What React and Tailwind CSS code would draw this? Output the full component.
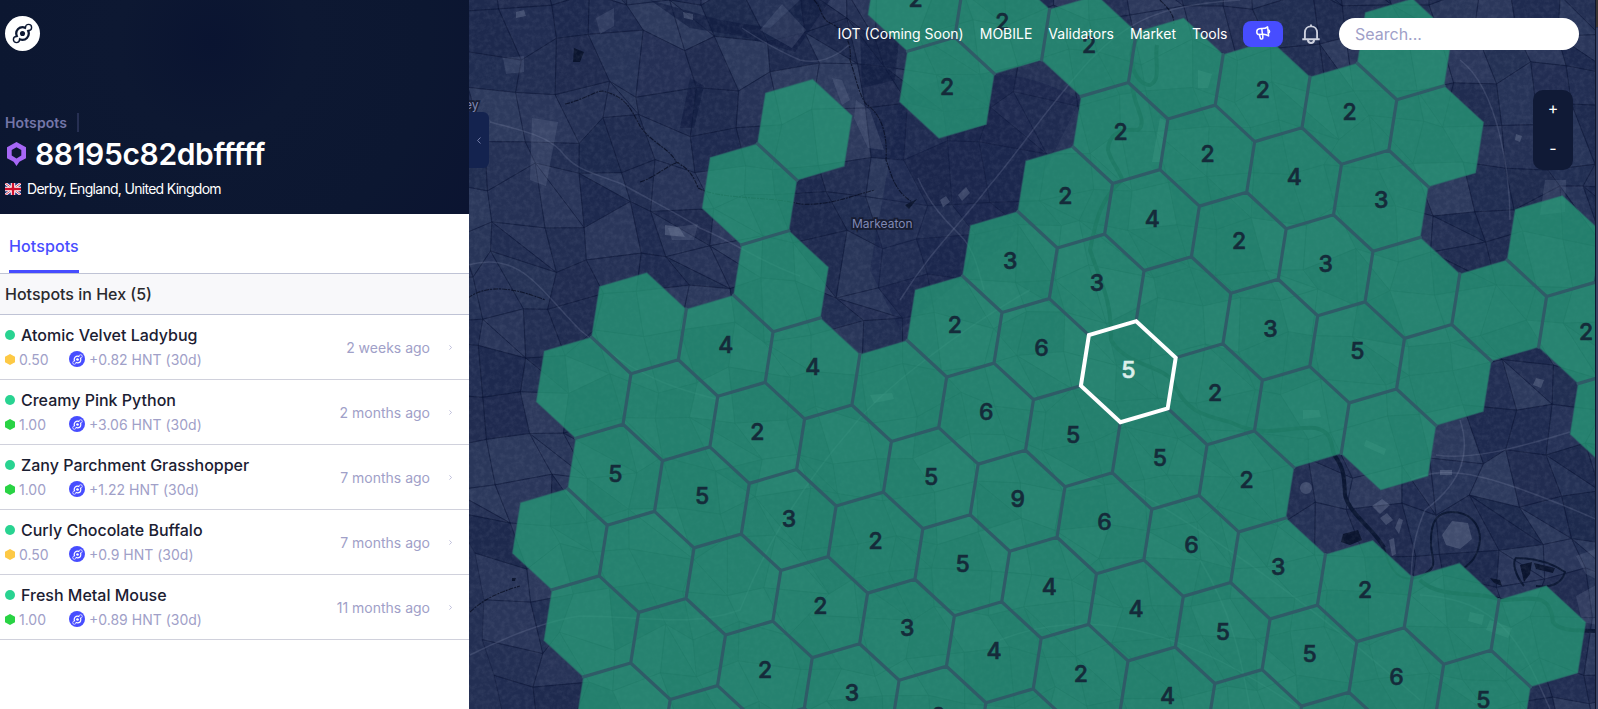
import React from "react";

/* ---------- map data ---------- */

// Each row runs along the lattice vector A; [j, firstI, labels...] where "" is an unlabelled
// cell and null is a gap.
const ROWS = [
  [-5, 0, ""],
  [-4, -5, "2", "2", "2", "", "2", "2", ""],
  [-3, -4, "2", null, "2", "2", "4", "3", null, ""],
  [-2, -5, "", null, null, "2", "4", "2", "3", "", "", "2"],
  [-1, -5, "", null, null, "3", "3", "", "3", "5", "", null, ""],
  [0, -4, "", null, "2", "6", "5", "2", "", ""],
  [1, -5, "", "4", "4", "", "6", "5", "5", "2"],
  [2, -5, "", "", "2", "", "5", "9", "6", "6", "3", "2", "", ""],
  [3, -4, "5", "5", "3", "2", "5", "4", "4", "5", "5", "6", "5"],
  [4, -4, "", "", "", "2", "3", "4", "2", "4", "", ""],
  [5, -3, "", "", "2", "3", "2", "", ""],
  [6, -2, "", "", ""],
];

const A = [86.8, 22.6];
const C = [-55.3, 64.5];
const VERTS = [
  [39.4, 36.6],
  [-7.9, 50.5],
  [-47.4, 14],
  [-39.4, -36.6],
  [7.9, -50.5],
  [47.4, -14],
];
// neighbour across the edge from vertex k to vertex k+1
const NEIGHBOURS = [
  [1, 1],
  [0, 1],
  [-1, 0],
  [-1, -1],
  [0, -1],
  [1, 0],
];

const HEXES = [];
ROWS.forEach(([j, start, ...labels]) => {
  labels.forEach((label, n) => {
    if (label === null) return;
    const i = start + n;
    HEXES.push({
      i,
      j,
      label,
      x: 1128.2 + A[0] * i + C[0] * j,
      y: 371.7 + A[1] * i + C[1] * j,
      selected: i === 0 && j === 0,
    });
  });
});
const OCCUPIED = new Set(HEXES.map((h) => `${h.i},${h.j}`));
const points = (h) => VERTS.map(([dx, dy]) => `${(h.x + dx).toFixed(1)},${(h.y + dy).toFixed(1)}`).join(" ");

const INNER = [];
HEXES.forEach((h) => {
  NEIGHBOURS.forEach(([di, dj], k) => {
    if (k > 1 && k < 5) return;
    if (!OCCUPIED.has(`${h.i + di},${h.j + dj}`)) return;
    const a = VERTS[k];
    const b = VERTS[(k + 1) % 6];
    INNER.push(`M${(h.x + a[0]).toFixed(1)} ${(h.y + a[1]).toFixed(1)}L${(h.x + b[0]).toFixed(1)} ${(h.y + b[1]).toFixed(1)}`);
  });
});

/* ---------- terrain ---------- */

const seeded = (seed) => {
  let s = seed;
  return () => {
    s = (s * 1664525 + 1013904223) % 4294967296;
    return s / 4294967296;
  };
};

const FIELDS = (() => {
  const rnd = seeded(77);
  const cols = 32;
  const rows = 20;
  const size = 42;
  const grid = [];
  for (let r = 0; r <= rows; r++) {
    grid.push([]);
    for (let c = 0; c <= cols; c++) {
      const x = 440 + c * size + (rnd() - 0.5) * 26;
      const y = -60 + r * size + (rnd() - 0.5) * 26;
      grid[r].push([x + (y - 350) * 0.18, y - (x - 1000) * 0.06]);
    }
  }
  const out = [];
  for (let r = 0; r < rows; r++) {
    for (let c = 0; c < cols; c++) {
      const q = [grid[r][c], grid[r][c + 1], grid[r + 1][c + 1], grid[r + 1][c]];
      const v = rnd();
      const split = rnd();
      const put = (pts, t) =>
        out.push({
          d: pts.map((p) => `${p[0].toFixed(1)},${p[1].toFixed(1)}`).join(" "),
          fill: t > 0.45 ? "#7f8fae" : "#071338",
          o: t > 0.45 ? (t - 0.45) * 0.22 : (0.45 - t) * 0.45,
        });
      if (split > 0.8) {
        put([q[0], q[1], q[2]], v);
        put([q[0], q[2], q[3]], rnd());
      } else put(q, v);
    }
  }
  return out;
})();

const ROADS = [
  "M490 122 C520 130 545 135 560 150 C575 170 590 172 622 184 C650 200 680 215 700 228 C730 240 760 262 800 276",
  "M742 28 C760 40 780 52 800 60 C818 64 835 58 850 44",
  "M1240 0 C1160 5 1130 20 1090 60 C1045 110 1020 150 990 185 C960 225 935 245 900 300",
  "M918 178 C930 205 945 220 960 235 C975 250 978 270 984 290",
  "M470 655 C500 640 540 622 580 616 C640 616 690 628 740 610 C760 560 790 500 850 430 C880 390 960 330 1030 290",
  "M1436 455 C1470 460 1510 450 1570 432",
  "M1460 420 C1470 450 1465 480 1425 510 C1412 540 1412 560 1411 580",
  "M1411 480 C1440 470 1460 460 1598 520",
  "M1420 595 C1500 600 1520 640 1550 709",
  "M468 265 C520 250 540 290 580 330 C640 380 680 390 720 400",
  "M1200 560 C1230 610 1240 650 1250 709",
  "M1000 640 C1100 600 1200 640 1300 709",
  "M1460 60 C1500 90 1510 180 1510 220",
  "M1120 480 C1180 520 1260 560 1420 700",
];

const STREAMS = [
  "M565 104 C590 98 598 88 606 92 C628 98 632 112 640 126 C650 142 672 150 676 162 C688 168 694 176 698 188 C720 200 770 196 800 204 C830 206 850 196 875 190",
  "M814 0 C822 8 820 16 828 22 C846 30 852 44 850 60 C856 78 858 92 866 104 C878 112 888 128 886 160 C892 176 894 190 912 202",
  "M1160 0 C1168 8 1174 14 1174 24",
  "M640 182 C658 176 668 164 680 162",
  "M468 298 C490 282 520 290 545 300",
  "M470 612 C485 598 500 592 520 586",
];

const Terrain = () => (
  <g>
    <rect x="469" width="1129" height="709" fill="#232f53" />
    <g stroke="#0c1738" strokeOpacity="0.4" strokeWidth="1">
      {FIELDS.map((f, k) => (
        <polygon key={k} points={f.d} fill={f.fill} fillOpacity={f.o} />
      ))}
    </g>
    <path
      d="M650 0 L720 20 L770 28 L800 0 L830 0 L795 52 L740 36 L690 28Z M860 30 L900 30 L895 80 L862 88Z M690 78 L704 86 L694 128 L680 128Z"
      fill="#0f1b3f"
      fillOpacity="0.6"
    />
    <path d="M900 100 C940 70 1010 60 1080 100 L1010 240 L900 330 L870 270Z" fill="#16224a" fillOpacity="0.45" />
    <path
      d="M832 78 L842 80 L850 100 L842 105Z M856 100 L870 110 L884 150 L868 148 L854 118Z M532 118 L558 122 L546 186 L530 180Z M668 228 L698 224 L694 240 L672 240Z M1540 215 L1565 212 L1566 180 L1545 180Z M1576 556 L1598 548 L1598 580 L1586 574Z M1576 596 L1598 584 L1598 625 L1582 622Z M596 18 L614 8 L614 26 L600 34Z M503 58 L524 56 L524 72 L506 74Z M760 30 L782 4 L806 30 L792 48Z"
      fill="#8e9bb8"
      fillOpacity="0.17"
    />
    <g fill="none" stroke="#8793b0" strokeOpacity="0.22" strokeWidth="1.5">
      {ROADS.map((d) => (
        <path key={d} d={d} />
      ))}
    </g>
    <g fill="none" stroke="#060d22" strokeOpacity="0.8" strokeWidth="1.1" strokeDasharray="5 1 2 1">
      {STREAMS.map((d) => (
        <path key={d} d={d} />
      ))}
    </g>
    <g fill="none" stroke="#0b1733" strokeWidth="4" strokeLinejoin="round">
      <path d="M1137 38 C1125 60 1135 84 1150 85 C1162 80 1154 60 1157 45" />
      <path d="M1132 85 C1135 110 1148 122 1138 130 C1120 128 1108 135 1108 150 C1112 165 1120 170 1122 180 C1100 200 1096 220 1090 250 C1100 280 1112 300 1111 340 C1125 365 1160 365 1172 380 C1185 410 1200 415 1230 422 C1265 440 1290 425 1315 428 C1335 432 1330 448 1335 456 C1345 470 1344 480 1345 495 C1350 515 1375 530 1384 548" />
      <path d="M1384 548 C1390 572 1400 583 1420 577 C1440 566 1432 562 1431 545 C1430 520 1438 512 1452 512 C1468 512 1480 522 1480 540 C1478 556 1472 562 1464 568 M1524 586 C1515 575 1512 562 1516 558 C1540 558 1556 566 1565 572 C1562 584 1550 588 1536 586" strokeWidth="2" />
      <path d="M1420 580 C1440 600 1480 590 1500 600 C1530 600 1550 590 1553 622 C1560 632 1580 630 1598 631" />
    </g>
    <path
      d="M574 48 L584 52 L580 62 L573 62Z M1520 565 L1532 562 L1530 574 L1524 582Z M1534 563 L1555 568 L1553 573 L1536 569Z M1343 534 L1358 530 L1362 540 L1350 545 L1341 542Z M512 578 l4 0 l-1 3 l-3 0Z M905 205 l12 -6 l-8 10Z M1490 578 l10 2 l2 6 l-8 -3Z"
      fill="#0a142e"
    />
    <g fill="#a0abc4" fillOpacity="0.25">
      <path d="M1372 506 l10 -7 l8 6 l-10 9z M1380 518 l7 -5 l6 7 l-7 5z M1395 528 l4 -10 l4 2 l-4 14z M1389 540 l5 -2 l2 16 l-4 2z M1440 470 l12 0 l0 5 l-12 0z M1300 488 a6 6 0 1 0 12 0 a6 6 0 1 0 -12 0z M1442 535 l10 -14 l16 2 l4 16 l-12 10 l-14 -4z" />
      <path d="M1366 440 l20 9 l-2 6 l-20 -9z M1303 410 l16 0 l2 7 l-18 2z M1490 620 l22 8 l-4 10 l-22 -8z M1470 612 l14 3 l-2 10 l-14 -4z M665 225 l14 2 l6 10 l-20 -2z M683 12 l10 2 l0 6 l-9 -2z M516 12 l8 -2 l2 6 l-10 2z M940 200 l6 -4 l4 6 l-7 5z M958 195 l8 -8 l4 6 l-8 8z M1516 134 l6 2 l-2 6 l-5 -2z M1536 378 l8 2 l-3 8 l-8 -3z M870 395 l22 -2 l2 6 l-20 4z M1198 70 l14 4 l-4 14 l-10 0z M1160 118 l8 4 l-8 40 l-8 0z" />
    </g>
    <rect x="469" width="1129" height="709" filter="url(#grain)" opacity="0.07" />
  </g>
);

const HexMap = () => (
  <svg className="block h-[709px] w-[1129px]" viewBox="469 0 1129 709">
    <defs>
      <filter id="grain" x="0" y="0" width="100%" height="100%">
        <feTurbulence type="fractalNoise" baseFrequency="0.2" numOctaves="4" seed="8" />
        <feColorMatrix values="0 0 0 0 0.5  0 0 0 0 0.55  0 0 0 0 0.7  2.4 0 0 0 -0.9" />
      </filter>
    </defs>
    <Terrain />
    <g fontFamily="Inter, sans-serif" fontSize="12" fill="#8089b5" stroke="#171d33" strokeWidth="3.5" paintOrder="stroke">
      <text x="852" y="227.5">Markeaton</text>
      <text x="465" y="108.5">ey</text>
    </g>
    <g fill="#269f79" fillOpacity="0.73" stroke="#2d6268" strokeOpacity="0.45" strokeWidth="1.5">
      {HEXES.map((h) => (
        <polygon key={`${h.i},${h.j}`} points={points(h)} />
      ))}
    </g>
    <path d={INNER.join("")} fill="none" stroke="#2f5b67" strokeWidth="3.2" strokeLinecap="round" />
    <g fontFamily="Inter, sans-serif" fontSize="23" fontWeight="500" textAnchor="middle">
      {HEXES.filter((h) => h.label).map((h) => (
        <text
          key={`${h.i},${h.j}`}
          x={h.x + 0.2}
          y={h.y + 6.7}
          fill={h.selected ? "#dcefeb" : "#152b3a"}
          stroke={h.selected ? "#dcefeb" : "#152b3a"}
          strokeWidth="0.6"
        >
          {h.label}
        </text>
      ))}
    </g>
    <polygon points={points({ x: 1128.3, y: 371.7 })} fill="none" stroke="#fff" strokeWidth="4" />
    <rect x="1595" width="1" height="709" fill="#10172b" />
    <rect x="1596" width="2" height="27" fill="#3a3636" />
    <rect x="1596" y="28" width="2" height="681" fill="#3a4467" />
  </svg>
);

/* ---------- icons ---------- */

const HeliumGlyph = ({ className }) => (
  <svg className={className} viewBox="0 0 24 24" fill="none" stroke="currentColor">
    <circle cx="12" cy="12" r="7.2" strokeWidth="2.6" />
    <circle cx="12" cy="12" r="2.9" fill="currentColor" stroke="none" />
    <circle className="fill-(--disc)" cx="18.9" cy="5.1" r="3.5" strokeWidth="1.6" />
    <circle className="fill-(--disc)" cx="5.1" cy="18.9" r="3.5" strokeWidth="1.6" />
    <path className="stroke-(--disc)" d="M14.6 9.4 L18 6 M9.4 14.6 L6 18" strokeWidth="2.2" />
  </svg>
);

const UkFlag = () => (
  <svg className="h-3 w-4" viewBox="0 0 16 12">
    <rect width="16" height="12" fill="#1f2f7d" />
    <path d="M0 0L16 12M16 0L0 12" stroke="#fff" strokeWidth="2.6" />
    <path d="M0 0L16 12M16 0L0 12" stroke="#d2203b" strokeWidth="0.9" />
    <path d="M8 0V12M0 6H16" stroke="#fff" strokeWidth="4.4" />
    <path d="M8 0V12M0 6H16" stroke="#d2102e" strokeWidth="2.4" />
  </svg>
);

const HexPin = () => (
  <svg className="h-6 w-[19px]" viewBox="0 0 19 24">
    <path
      d="M9.5 0L19 5.3V16.2L12.4 19.8L9.5 24L6.6 19.8L0 16.2V5.3Z M9.5 5.2L4.7 8V13.6L9.5 16.4L14.3 13.6V8Z"
      fill="#a667f6"
      fillRule="evenodd"
    />
  </svg>
);

const Megaphone = () => (
  <svg className="h-[14px] w-[15px]" viewBox="0 0 15 14" fill="none" stroke="#fff" strokeWidth="1.5" strokeLinecap="round" strokeLinejoin="round">
    <path d="M5.6 2.6C8 2.7 10 2.2 11.6 0.9L12.6 10C10.8 8.7 9 8.1 6.6 8.3L3.4 8.6C1.8 8.6 0.8 7.4 0.8 5.9C0.8 4.2 1.8 3 3.3 2.8Z" />
    <path d="M5.8 2.8L6.4 8.2M3.4 8.6L4.4 12.4C4.7 13.3 6.8 13.1 6.8 11.9V8.5M12.2 3.9C13.8 3.9 14.2 6.6 12.4 7" />
  </svg>
);

const Bell = () => (
  <svg className="h-5 w-[18px]" viewBox="0 0 18 20" fill="none" stroke="#cdd1de" strokeWidth="1.9">
    <path d="M9 0.4V2.4 M0.3 15.2H17.7 M2.9 15V8.6C2.9 5 5.4 2.4 9 2.4S15.1 5 15.1 8.6V15" />
    <path d="M5.9 15.6C6 17.8 7.2 19 9 19S12 17.8 12.1 15.6" />
  </svg>
);

const Chevron = ({ className, flip }) => (
  <svg className={className} viewBox="0 0 4 7" fill="none" stroke="currentColor" strokeWidth="0.9">
    <path d={flip ? "M3.5 0.5L0.6 3.5L3.5 6.5" : "M0.5 0.5L3.4 3.5L0.5 6.5"} />
  </svg>
);

/* ---------- side panel ---------- */

const HOTSPOTS = [
  { name: "Atomic Velvet Ladybug", scale: "0.50", earned: "+0.82 HNT (30d)", age: "2 weeks ago" },
  { name: "Creamy Pink Python", scale: "1.00", earned: "+3.06 HNT (30d)", age: "2 months ago" },
  { name: "Zany Parchment Grasshopper", scale: "1.00", earned: "+1.22 HNT (30d)", age: "7 months ago" },
  { name: "Curly Chocolate Buffalo", scale: "0.50", earned: "+0.9 HNT (30d)", age: "7 months ago" },
  { name: "Fresh Metal Mouse", scale: "1.00", earned: "+0.89 HNT (30d)", age: "11 months ago" },
];

const HotspotRow = ({ name, scale, earned, age }) => (
  <li className="flex h-[65px] items-center border-b border-[#d0d1dc] pl-[5px] pr-[17px]">
    <div className="flex flex-1 flex-col">
      <div className="flex h-6 items-center">
        <span className="mr-1.5 size-2.5 rounded-full bg-[#29d391]" />
        <span className="text-base font-medium text-[#1b2032]">{name}</span>
      </div>
      <div className="flex h-6 items-center text-sm text-[#a0a0c8]">
        <svg className="mr-1 h-[11px] w-2.5" viewBox="0 0 10 11">
          <path d="M5 0L10 2.8V8.2L5 11L0 8.2V2.8Z" fill={scale === "1.00" ? "#29d344" : "#fdc945"} />
        </svg>
        <span className="w-[50px] pt-px">{scale}</span>
        <span className="mr-1 flex size-4 items-center justify-center rounded-full bg-[#474dff] text-white [--disc:#474dff]">
          <HeliumGlyph className="size-[11px]" />
        </span>
        <span className="pt-px">{earned}</span>
      </div>
    </div>
    <span className="pt-px text-sm text-[#a0a0c8]">{age}</span>
    <Chevron className="ml-[19px] h-[5px] w-[3px] text-[#a0a0c8]" />
  </li>
);

const SidePanel = () => (
  <aside className="flex h-full w-[469px] shrink-0 flex-col bg-white">
    <header className="flex h-[214px] flex-col bg-[#0c1732] bg-[radial-gradient(circle_at_45%_20%,#0a1431_0,#0d1832_30%,#0c1731_70%,#0b1431_100%)] pl-[5px] pt-4">
      <div className="flex size-[35px] items-center justify-center rounded-full bg-white text-[#0c1732] [--disc:#fff]">
        <HeliumGlyph className="size-[21px]" />
      </div>
      <div className="mt-[62px] flex h-[19px] items-center">
        <span className="text-sm font-semibold tracking-[0.1px] text-[#7476a8]">Hotspots</span>
        <span className="ml-2.5 h-[19px] w-0.5 bg-[#262f52]" />
      </div>
      <div className="mt-1 flex h-9 items-center pl-0.5">
        <HexPin />
        <h1 className="ml-[9px] text-3xl font-semibold tracking-[-0.35px] text-white">88195c82dbfffff</h1>
      </div>
      <div className="mt-[7px] flex h-5 items-center text-white">
        <UkFlag />
        <span className="ml-1.5 text-sm tracking-tighter">Derby, England, United Kingdom</span>
      </div>
    </header>
    <nav className="flex h-[60px] items-stretch border-b border-[#bfc3d5] pl-[9px]">
      <a className="flex items-center border-b-3 border-[#474dff] pt-2 text-base font-medium tracking-[0.1px] text-[#474dff]">
        Hotspots
      </a>
    </nav>
    <h2 className="flex h-[41px] items-center border-b border-[#bfc3d5] bg-[#f8f8fa] pl-[5px] text-base font-medium text-[#2a2a2e]">
      Hotspots in Hex (5)
    </h2>
    <ul>
      {HOTSPOTS.map((h) => (
        <HotspotRow key={h.name} {...h} />
      ))}
    </ul>
  </aside>
);

/* ---------- overlays ---------- */

const TopBar = () => (
  <div className="absolute right-[19px] top-[18px] flex h-8 items-center text-sm text-white">
    <div className="flex gap-4">
      <a>IOT (Coming Soon)</a>
      <a>MOBILE</a>
      <a>Validators</a>
      <a>Market</a>
      <a>Tools</a>
    </div>
    <button className="ml-[15.5px] flex h-[26px] w-10 items-center justify-center rounded-lg bg-[#474dff] pb-0.5">
      <Megaphone />
    </button>
    <span className="ml-[19px] flex w-[18px]">
      <Bell />
    </span>
    <div className="ml-[19px] flex h-8 w-60 items-center rounded-full bg-white pl-4 text-base text-[#a0a0c8]">Search...</div>
  </div>
);

const ZoomControl = () => (
  <div className="absolute right-[25px] top-[90px] flex h-20 w-10 flex-col rounded-[10px] bg-[#101a36] text-base text-white">
    <button className="flex flex-1 items-center justify-center pb-[5px]">+</button>
    <button className="flex flex-1 items-center justify-center pb-[5px]">-</button>
  </div>
);

export default function App() {
  return (
    <div className="flex h-[709px] w-[1598px] overflow-hidden bg-[#212e53] font-[Inter,sans-serif]">
      <SidePanel />
      <main className="relative h-full w-[1129px]">
        <HexMap />
        <button className="absolute left-0 top-[112px] flex h-14 w-5 items-center justify-center rounded-r-md bg-[#14234f] text-[#8088b4]">
          <Chevron className="h-[7px] w-1" flip />
        </button>
        <TopBar />
        <ZoomControl />
      </main>
    </div>
  );
}
